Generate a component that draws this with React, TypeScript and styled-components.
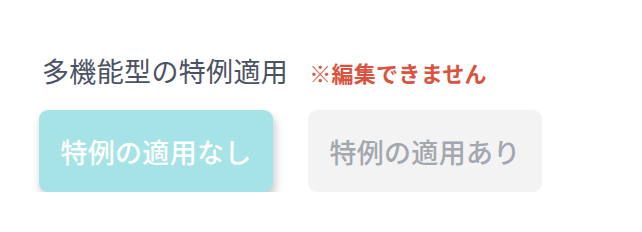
import React from "react";
import styled, { createGlobalStyle } from "styled-components";

const GlobalStyle = createGlobalStyle`
  html, body {
    margin: 0;
    padding: 0;
    background: #ffffff;
  }
  body {
    font-family: "Noto Sans CJK JP", "Noto Sans", sans-serif;
  }
`;

const Page = styled.div`
  display: flex;
  flex-direction: column;
  gap: 21px;
  padding: 53px 0 0 39px;
`;

const Header = styled.div`
  display: flex;
  align-items: center;
  gap: 21px;
  padding-left: 3px;
`;

const Label = styled.span`
  font-size: 27px;
  line-height: 34px;
  font-weight: 400;
  letter-spacing: 0.35px;
  color: #4b5263;
`;

const Warning = styled.span`
  font-size: 22px;
  line-height: 34px;
  font-weight: 700;
  letter-spacing: 0.3px;
  color: #d9533f;
  margin-top: 2px;
`;

const Options = styled.div`
  display: flex;
  gap: 35px;
`;

const Option = styled.button<{ $active?: boolean }>`
  width: 234px;
  height: 82px;
  border: none;
  border-radius: 9px;
  padding: 0;
  display: flex;
  align-items: center;
  justify-content: center;
  font-family: "Noto Sans CJK JP", "Noto Sans", sans-serif;
  font-size: 27px;
  font-weight: 500;
  letter-spacing: 0.3px;
  background: ${(p) => (p.$active ? "#a6e3e6" : "#f3f3f4")};
  color: ${(p) => (p.$active ? "#ffffff" : "#a3a7ae")};
  box-shadow: ${(p) => (p.$active ? "2px 6px 10px rgba(0, 0, 0, 0.22)" : "none")};
  cursor: pointer;
`;

export default function App() {
  return (
    <>
      <GlobalStyle />
      <Page>
        <Header>
          <Label>多機能型の特例適用</Label>
          <Warning>※編集できません</Warning>
        </Header>
        <Options>
          <Option $active>特例の適用なし</Option>
          <Option>特例の適用あり</Option>
        </Options>
      </Page>
    </>
  );
}
